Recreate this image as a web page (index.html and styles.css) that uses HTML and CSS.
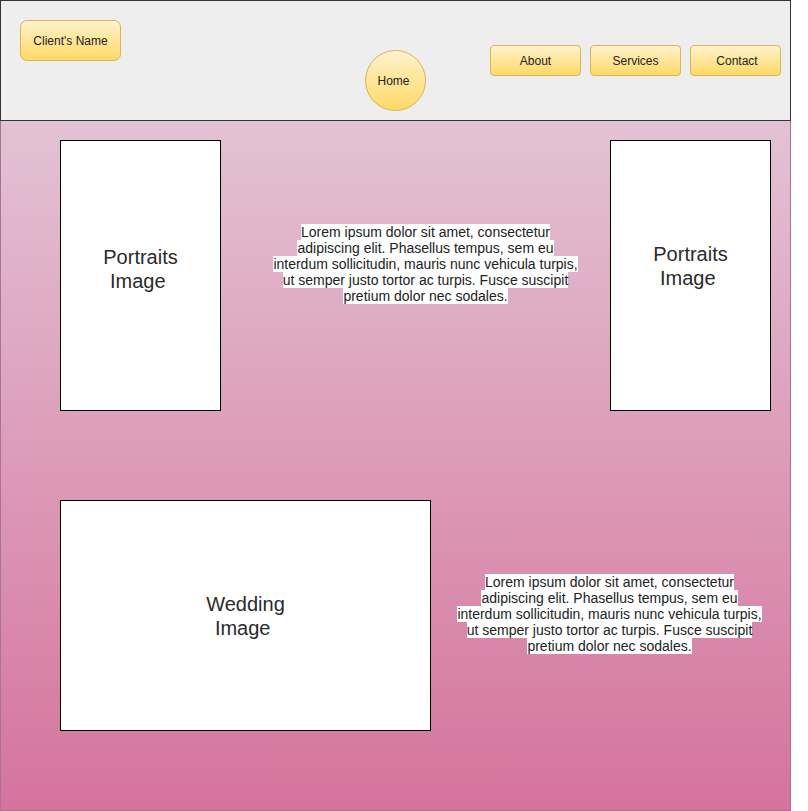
FILE: index.html
```html
<!DOCTYPE html>
<html>
<head>
<meta charset="utf-8">
<link rel="stylesheet" href="styles.css">
</head>
<body>
<div class="page">
  <header class="header">
    <div class="btn client">Client's Name</div>
    <div class="btn home">Home</div>
    <nav class="nav">
      <div class="btn navbtn">About</div>
      <div class="btn navbtn">Services</div>
      <div class="btn navbtn contact">Contact</div>
    </nav>
  </header>
  <main class="main">
    <section class="row row1">
      <div class="frame portrait p1">Portraits<br>Image&nbsp;</div>
      <p class="lorem lorem1"><span>Lorem ipsum dolor sit amet, consectetur<br>adipiscing elit. Phasellus tempus, sem eu<br>interdum sollicitudin, mauris nunc vehicula turpis,<br>ut semper justo tortor ac turpis. Fusce suscipit<br>pretium dolor nec sodales.</span></p>
      <div class="frame portrait p2">Portraits<br>Image&nbsp;</div>
    </section>
    <section class="row row2">
      <div class="frame wedding">Wedding<br>Image&nbsp;</div>
      <p class="lorem lorem2"><span>Lorem ipsum dolor sit amet, consectetur<br>adipiscing elit. Phasellus tempus, sem eu<br>interdum sollicitudin, mauris nunc vehicula turpis,<br>ut semper justo tortor ac turpis. Fusce suscipit<br>pretium dolor nec sodales.</span></p>
    </section>
  </main>
</div>
</body>
</html>
```
FILE: styles.css
```css
* { box-sizing: border-box; }
html, body { margin: 0; padding: 0; background: #ffffff; }
body { font-family: "Liberation Sans", Arial, sans-serif; color: #222; }

.page { width: 791px; }

.header {
  height: 121px;
  background: #eeeeee;
  border: 1px solid #333333;
  padding: 19px 0 0 19px;
  display: flex;
  align-items: flex-start;
}

.btn {
  background: linear-gradient(to bottom, #fff2cc, #ffd966);
  border: 1px solid #d6b656;
  display: flex;
  align-items: center;
  justify-content: center;
  font-size: 12px;
  color: #222;
}

.client {
  width: 101px;
  height: 41px;
  border-radius: 7px;
}

.home {
  width: 61px;
  height: 61px;
  border-radius: 50%;
  margin: 30px 0 0 244px;
  padding-right: 4px;
}

.nav {
  display: flex;
  gap: 9px;
  margin: 25px 0 0 64px;
}

.navbtn {
  width: 91px;
  height: 31px;
  border-radius: 4px;
}
.contact { padding-left: 3px; }

.main {
  height: 690px;
  background: linear-gradient(to bottom, #e3c2d4, #d5739d);
  border: 1px solid #a9729a;
  border-top: none;
  padding: 19px 0 0 59px;
}

.row { display: flex; align-items: flex-start; }
.row2 { margin-top: 89px; }

.frame {
  background: #ffffff;
  border: 1px solid #000000;
  display: flex;
  align-items: center;
  justify-content: center;
  text-align: center;
  font-size: 20px;
  line-height: 24px;
  color: #2a2a2a;
}

.portrait { width: 161px; height: 271px; }
.p1 { padding-bottom: 13px; }
.p2 { padding-bottom: 19px; margin-left: 32px; }
.wedding { width: 371px; height: 231px; padding-top: 1px; }

.lorem {
  margin: 0;
  width: 305px;
  text-align: center;
  font-size: 14px;
  line-height: 16px;
  white-space: nowrap;
  color: #222;
}
.lorem span { background: #ffffff; }
.lorem1 { margin: 84px 0 0 52px; }
.lorem2 { margin: 74px 0 0 26px; }
```
